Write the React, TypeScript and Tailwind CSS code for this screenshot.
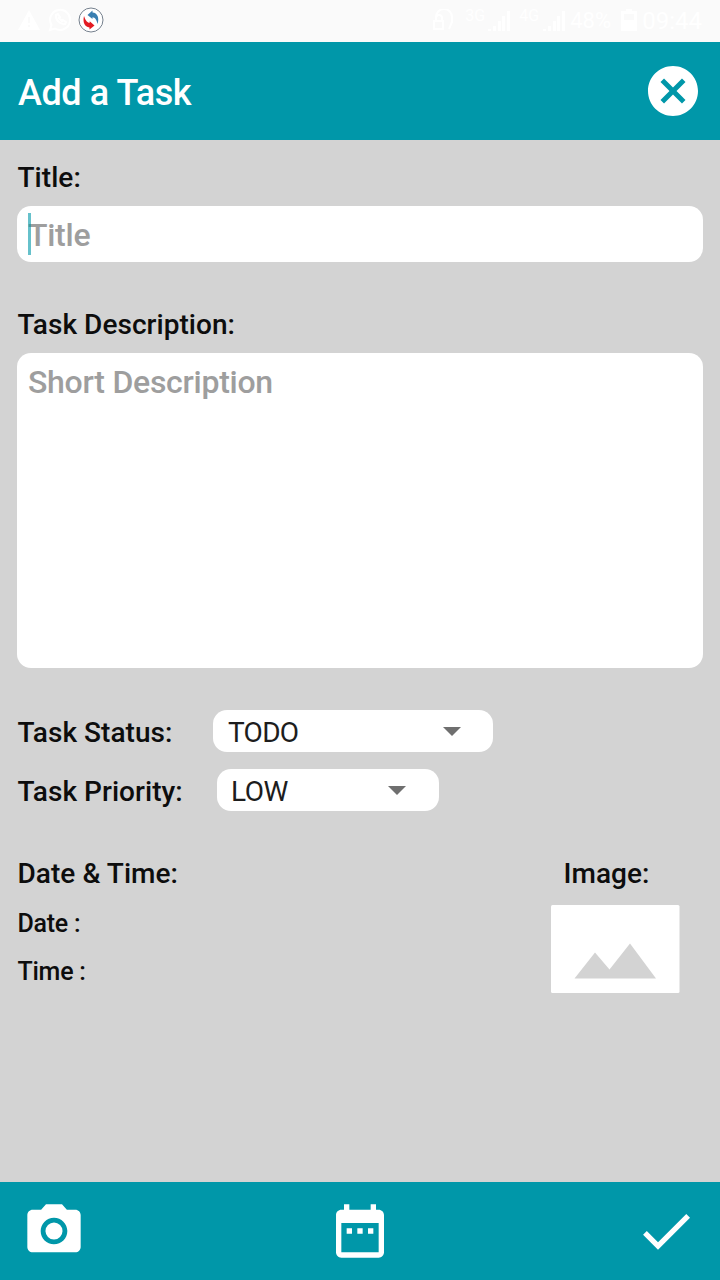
import type { ReactNode } from "react";

const CAMERA =
  "M9 2L7.17 4H4c-1.1 0-2 .9-2 2v12c0 1.1.9 2 2 2h16c1.1 0 2-.9 2-2V6c0-1.1-.9-2-2-2h-3.17L15 2H9zm3 15c-2.76 0-5-2.24-5-5s2.24-5 5-5 5 2.24 5 5-2.24 5-5 5z";
const CALENDAR =
  "M9 11H7v2h2v-2zm4 0h-2v2h2v-2zm4 0h-2v2h2v-2zm2-7h-1V2h-2v2H8V2H6v2H5c-1.11 0-1.99.9-1.99 2L3 20c0 1.1.89 2 2 2h14c1.1 0 2-.9 2-2V6c0-1.1-.9-2-2-2zm0 16H5V9h14v11z";
const CHECK = "M9 16.2L4.8 12l-1.4 1.4L9 19 21 7l-1.4-1.4L9 16.2z";
const CANCEL =
  "M12 2C6.47 2 2 6.47 2 12s4.47 10 10 10 10-4.47 10-10S17.53 2 12 2zm5 13.59L15.59 17 12 13.41 8.41 17 7 15.59 10.59 12 7 8.41 8.41 7 12 10.59 15.59 7 17 8.41 13.41 12 17 15.59z";

function Glyph({ d, children }: { d: string; children?: ReactNode }) {
  return (
    <svg viewBox="0 0 24 24" className="size-full" fill="currentColor">
      <path d={d} />
      {children}
    </svg>
  );
}

function Signal() {
  return (
    <svg viewBox="0 0 22 20" className="h-5 w-[22px]" fill="currentColor">
      <path d="M0 18h3v2H0zM5 15h3v5H5zM10 10h3v10h-3zM14 5h3v15h-3zM19 0h3v20h-3z" />
    </svg>
  );
}

function StatusBar() {
  return (
    <div className="flex h-[42px] items-start bg-[#fafafa] pl-[18px] text-white">
      <svg viewBox="0 0 22 20" className="mt-[10px] h-5 w-[22px]" fill="currentColor">
        <path d="M11 0l11 20H0zM10 7v6h2V7zm0 8v2h2v-2z" fillRule="evenodd" />
      </svg>
      <svg viewBox="0 0 24 24" className="mt-2 ml-2 size-6" fill="none" stroke="currentColor" strokeWidth="2">
        <path d="M2 22l1.5-5A10 10 0 1 1 7 20.500z" />
        <path d="M8 7c-1 4 4 10 9 9l1-2-3-2-1 1-3-3 1-1-2-3z" />
      </svg>
      <svg viewBox="0 0 26 26" className="mt-[7px] ml-1.5 size-[26px]">
        <circle cx="13" cy="13" r="12" fill="#fff" stroke="#76818e" strokeWidth="1" />
        <path d="M9.500 8L14.500 3.500V5.600C19.500 6 21.500 11 19.600 17C18.500 12.500 17 10.600 14.500 10.300V12Z" fill="#397fb1" />
        <path d="M16.500 18.500L11.500 22.500V20.400C6.500 20 4.500 15 6 9C7.500 13.500 9 15.600 11.700 15.800V14.300Z" fill="#e31b23" />
      </svg>
      <div className="ml-auto flex h-full items-start pr-[18px]">
        <svg viewBox="0 0 22 22" className="mt-[9px] size-[22px]" fill="none" stroke="currentColor" strokeWidth="2">
          <path d="M3 8a8 8 0 0 1 16 0v5l-3 7M1 12h9v8H1zM3 12V9a3 3 0 0 1 6 0v3" />
        </svg>
        <span className="mt-[7px] ml-[10px] w-[23px] text-base leading-[18px]">3G</span>
        <div className="mt-[11px]"><Signal /></div>
        <span className="mt-[7px] ml-[9px] w-6 text-base leading-[18px]">4G</span>
        <div className="mt-[11px]"><Signal /></div>
        <span className="mt-[9px] ml-[5px] w-[51px] text-[22px] leading-6">48%</span>
        <svg viewBox="0 0 16 22" className="mt-[9px] h-[22px] w-4" fill="currentColor">
          <path d="M5 0h6v2h5v20H0V2h5zM3 5v6h10V5z" fillRule="evenodd" />
        </svg>
        <span className="mt-[8px] ml-[5px] text-2xl leading-[26px]">09:44</span>
      </div>
    </div>
  );
}

function Label({ children }: { children: ReactNode }) {
  return (
    <div className="pl-[0.5px] text-[28px] leading-[34px] font-medium tracking-[0.05px] whitespace-nowrap text-[#0d0d0d]">
      {children}
    </div>
  );
}

function Caret() {
  return (
    <svg viewBox="0 0 18 9" className="h-[9px] w-[18px]" fill="#6f6f6f">
      <path d="M0 0h18L9 9z" />
    </svg>
  );
}

export default function App() {
  return (
    <div className="flex h-[1280px] w-[720px] flex-col overflow-hidden bg-[#d3d3d3] font-['Roboto',sans-serif]">
      <StatusBar />
      <header className="flex h-[98px] items-center justify-between bg-[#0097a9] pr-[17px] pl-[18px] text-white">
        <h1 className="mt-1 text-[36px] leading-[42px] font-medium tracking-[-0.4px]">Add a Task</h1>
        <button className="size-[60px]" aria-label="Close">
          <Glyph d={CANCEL} />
        </button>
      </header>

      <main className="flex flex-1 flex-col px-[17px] pt-[21px]">
        <Label>Title:</Label>
        <div className="mt-[11px] flex h-14 items-center rounded-[14px] bg-white px-[11px]">
          <div className="relative">
            <span className="block h-[42px] pt-px text-[32px] leading-[42px] font-medium tracking-[-0.27px] text-[#9e9e9e]">Title</span>
            <span className="absolute top-0 left-0 h-[42px] w-[3px] bg-[#0097a9]/60" />
          </div>
        </div>

        <div className="mt-[46px]">
          <Label>Task Description:</Label>
        </div>
        <div className="mt-[11px] h-[315px] rounded-[14px] bg-white px-[11px] pt-[8px] text-[32px] leading-[42px] font-medium tracking-[-0.27px] text-[#9e9e9e]">
          Short Description
        </div>

        <div className="mt-[42px] flex h-[42px] items-center">
          <div className="w-[196px] pt-1"><Label>Task Status:</Label></div>
          <div className="flex h-[42px] w-[280px] items-center justify-between rounded-[14px] bg-white pr-8 pl-[15px]">
            <span className="pt-[3px] text-[28px] leading-[34px] tracking-[-0.7px] text-[#1d1d1d]">TODO</span>
            <Caret />
          </div>
        </div>
        <div className="mt-[17px] flex h-[42px] items-center">
          <div className="w-[200px] pt-1"><Label>Task Priority:</Label></div>
          <div className="flex h-[42px] w-[222px] items-center justify-between rounded-[14px] bg-white pr-[33px] pl-[14px]">
            <span className="pt-[3px] text-[28px] leading-[34px] tracking-[-0.5px] text-[#1d1d1d]">LOW</span>
            <div className="pt-px"><Caret /></div>
          </div>
        </div>

        <div className="mt-[46px] flex justify-between pr-[23px]">
          <div>
            <Label>Date &amp; Time:</Label>
            <div className="mt-[18px] pl-[0.5px] text-[25px] leading-[30px] font-medium tracking-[-0.25px] text-[#0d0d0d]">Date :</div>
            <div className="mt-[18px] pl-[0.5px] text-[25px] leading-[30px] font-medium tracking-[-0.25px] text-[#0d0d0d]">Time :</div>
          </div>
          <div className="w-[129px]">
            <div className="pl-3"><Label>Image:</Label></div>
            <svg viewBox="0 0 129 88" className="mt-[14px] h-[88px] w-[129px]">
              <rect width="128.5" height="88" rx="1.500" fill="#fff" />
              <path d="M23.500 73.500L44 47.500L58.500 64.500L79 38.500L105 73.500Z" fill="#d3d3d3" />
            </svg>
          </div>
        </div>
      </main>

      <footer className="flex h-[98px] items-center justify-between bg-[#0097a9] px-[22px] text-white">
        <button className="size-16" aria-label="Camera">
          <Glyph d={CAMERA}>
            <circle cx="12" cy="12" r="3.2" />
          </Glyph>
        </button>
        <button className="size-16" aria-label="Date">
          <Glyph d={CALENDAR} />
        </button>
        <button className="size-16" aria-label="Save">
          <Glyph d={CHECK} />
        </button>
      </footer>
    </div>
  );
}
